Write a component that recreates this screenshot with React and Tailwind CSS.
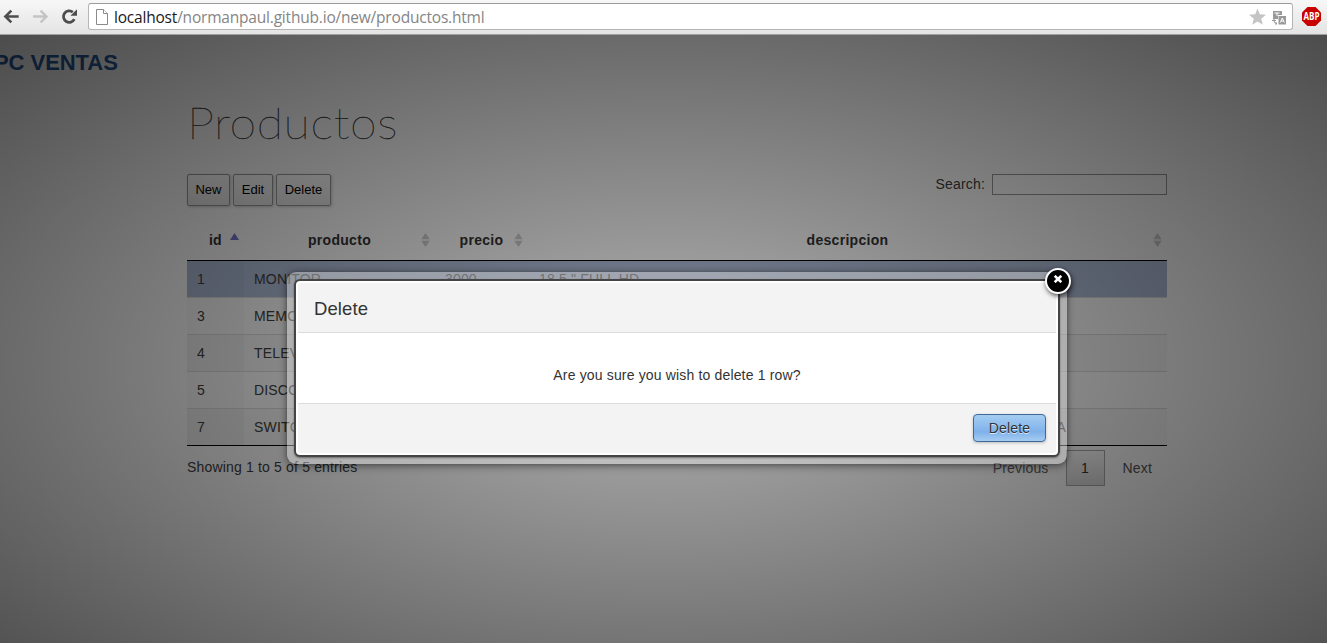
import React from "react";

const rows = [
  { id: 1, producto: "MONITOR", precio: "3000", descripcion: "18.5 \" FULL HD" },
  { id: 3, producto: "MEMORIA", precio: "800", descripcion: "8 GB DDR3" },
  { id: 4, producto: "TELEVISOR", precio: "9000", descripcion: "40 \" FULL HD" },
  { id: 5, producto: "DISCO DURO", precio: "1200", descripcion: "1 TB SATA" },
  { id: 7, producto: "SWITCH", precio: "1500", descripcion: "SWITCH 24 PUERTOS LAN A" },
];

const rowTone = (i) => {
  if (i === 0) return "bg-[#b0bed9]";
  return i % 2 === 0 ? "bg-[#f9f9f9] border-t border-[#dddddd]" : "bg-white border-t border-[#dddddd]";
};
const idTone = (i) => {
  if (i === 0) return "bg-[#acbad4]";
  return i % 2 === 0 ? "bg-[#f1f1f1]" : "bg-[#fafafa]";
};

function SortIcon() {
  return (
    <svg className="shrink-0" width="9" height="14" viewBox="0 0 9 14" fill="#cdcdcd">
      <path d="M4.5 0 8.7 6.3H.3ZM4.5 14 .3 7.7h8.4Z" />
    </svg>
  );
}

function BrowserBar() {
  return (
    <div className="flex h-[35px] items-start border-b border-[#a0a0a0] bg-linear-to-b from-[#f7f7f7] to-[#e4e4e4] pt-[3px]">
      <svg className="mt-[5px] ml-[3px] shrink-0" width="80" height="17" viewBox="0 0 80 17" fill="none">
        <path d="M15.7 8.5H3M8.3 2.6 2.4 8.5l5.9 5.9" stroke="#4d4d4d" strokeWidth="2.6" />
        <path d="M30 8.5h12.7M37.6 2.6l5.9 5.9-5.9 5.9" stroke="#c4c4c4" strokeWidth="2.4" />
        <path d="M71.3 11.1A5.7 5.7 0 1 1 69.8 4.2" stroke="#4d4d4d" strokeWidth="2.8" />
        <path d="M74 1.2v6.6h-6.6Z" fill="#4d4d4d" />
      </svg>
      <div className="ml-[5px] flex h-[27px] w-[1205px] shrink-0 items-center rounded-[3px] border border-[#b5b5b5] border-t-[#9b9b9b] bg-white pl-[7px]">
        <svg width="12" height="16" viewBox="0 0 12 16" fill="#fff" stroke="#8b8b8b">
          <path d="M.5.5h7l4 4v11H.5Z" />
          <path d="M7.5.5v4h4" />
        </svg>
        <div className="ml-[6px] font-['Open_Sans',sans-serif] text-[15.5px] leading-[24px] tracking-[-0.2px] whitespace-nowrap text-[#858585]">
          <span className="text-[#1a1a1a]">localhost</span>/normanpaul.github.io/new/productos.html
        </div>
        <svg className="mr-[5px] ml-auto" width="38" height="18" viewBox="0 0 38 18">
          <path d="m8.5.5 2.3 5.8 6.2.4-4.8 4 1.6 6.1-5.3-3.4-5.3 3.4 1.6-6.1-4.8-4 6.2-.4Z" fill="#c4c4c4" />
          <path d="M24 3h9v4h-4v4h-5ZM29.500 8H37v8.500h-7.500Z" fill="#999" />
          <path d="M25.500 5h5M28 5v3" stroke="#fff" />
          <path d="m31.300 14.500 2-4.500 2 4.500M32 13h2.600" stroke="#fff" fill="none" />
          <path d="M23 12.500h4M25 10.500v2.500q0 2.500 3 2.500M27 14v3" stroke="#999" fill="none" />
        </svg>
      </div>
      <svg className="mt-[3px] ml-[8px] shrink-0" width="21" height="21" viewBox="0 0 21 21">
        <path d="M6.500 1h8L20 6.500v8L14.500 20h-8L1 14.500v-8Z" fill="#c80000" />
        <text x="10.500" y="14" textAnchor="middle" textLength="16" lengthAdjust="spacingAndGlyphs" className="fill-white font-['Open_Sans',sans-serif] text-[10px] font-bold">ABP</text>
      </svg>
    </div>
  );
}

function ToolButton({ children, width }) {
  return (
    <button className={`${width} h-[32px] rounded-[2px] border border-[#999999] bg-linear-to-b from-white to-[#e9e9e9] text-[13px] tracking-normal text-black shadow-[1px_1px_3px_#ccc]`}>
      {children}
    </button>
  );
}

function Products() {
  return (
    <div className="h-[608px] bg-white text-[14px] tracking-[0.17px] text-[#404040]">
      <div className="-ml-[6px] pt-[14px] text-[22px] leading-[28px] font-bold tracking-[-0.05px] text-[#285a9c]">PC VENTAS</div>
      <div className="ml-[187px] w-[980px]">
        <h1 className="mt-[18px] h-[56px] w-[200px] origin-left scale-x-[1.1] font-[Lato,sans-serif] text-[44px] leading-[54px] font-[100] tracking-[0.5px] text-[#333333] [-webkit-text-stroke:0.3px_#333]">Productos</h1>
        <div className="mt-[23px] flex h-[41px] items-start justify-between">
          <div className="flex gap-[3px]">
            <ToolButton width="w-[43px]">New</ToolButton>
            <ToolButton width="w-[40px]">Edit</ToolButton>
            <ToolButton width="w-[55px]">Delete</ToolButton>
          </div>
          <label className="flex items-center gap-[7px] leading-[21px]">
            Search:
            <span className="block h-[21px] w-[175px] border border-[#999999]" />
          </label>
        </div>
        <div className="flex h-[46px] items-center border-b border-black pt-[5px] font-bold text-[#333333]">
          <div className="flex w-[57px] items-center pl-[22px]">
            id
            <svg className="-mt-[8px] ml-[8px]" width="9" height="7" viewBox="0 0 9 7"><path d="M4.500 0 9 7H0Z" fill="#7578d0" /></svg>
          </div>
          <div className="flex w-[191px] items-center pr-[5px] tracking-[0.3px]"><span className="flex-1 pl-[14px] text-center">producto</span><SortIcon /></div>
          <div className="flex w-[94px] items-center pr-[6px] pl-[14px] tracking-[0.3px]"><span className="flex-1 text-center">precio</span><SortIcon /></div>
          <div className="flex flex-1 items-center pr-[5px] tracking-[0.3px]"><span className="flex-1 pl-[13px] text-center">descripcion</span><SortIcon /></div>
        </div>
        <div className="border-b border-black">
          {rows.map((r, i) => (
            <div key={r.id} className={`flex ${i === 0 ? "h-[36px]" : "h-[37px]"} items-stretch leading-[36px] ${rowTone(i)}`}>
              <div className={`w-[57px] pl-[10px] ${idTone(i)}`}>{r.id}</div>
              <div className="w-[191px] pl-[10px]">{r.producto}</div>
              <div className="w-[94px] pl-[10px]">{r.precio}</div>
              <div className="flex-1 pl-[10px] whitespace-nowrap">
                {i === 4 ? <div className="w-[527px] text-right">{r.descripcion}</div> : r.descripcion}
              </div>
            </div>
          ))}
        </div>
        <div className="flex justify-between pt-[4px]">
          <div className="pt-[7px] leading-[20px]">Showing 1 to 5 of 5 entries</div>
          <div className="flex items-center leading-[36px]">
            <span className="mr-[17px] text-[#666666]">Previous</span>
            <span className="h-[36px] w-[39px] border border-[#aaaaaa] bg-linear-to-b from-white to-[#dcdcdc] text-center leading-[34px] text-[#333333]">1</span>
            <span className="mr-[15px] ml-[18px] text-[#555555]">Next</span>
          </div>
        </div>
      </div>
    </div>
  );
}

function DeleteDialog() {
  return (
    <div className="absolute top-[237px] left-[287px] h-[192px] w-[780px] rounded-[9px] bg-white/35 p-[7px] shadow-[0_0_5px_rgba(0,0,0,0.35),0_3px_8px_rgba(0,0,0,0.3)]">
      <div className="flex h-[178px] w-[766px] flex-col rounded-[6px] border-[2px] border-[#444444] bg-white p-[2px] text-[#333333] shadow-[0_1px_2px_rgba(0,0,0,0.4)]">
        <div className="h-[50px] rounded-t-[3px] border-b border-[#dddddd] bg-[#f3f3f3] pl-[16px] text-[18.5px] leading-[52px] tracking-[0.1px]">Delete</div>
        <div className="flex-1 pt-[32px] text-center text-[14px] leading-[20px] tracking-[0.16px]">Are you sure you wish to delete 1 row?</div>
        <div className="flex h-[50px] justify-end rounded-b-[3px] border-t border-[#dddddd] bg-[#f3f3f3] pt-[10px] pr-[10px]">
          <button className="h-[28px] w-[73px] rounded-[4px] border border-[#3f6a98] bg-linear-to-b from-[#a5cdf2] via-[#7fb1ea] via-65% to-[#a5cdf2] text-[14px] tracking-[0.15px] text-[#333333] shadow-[0_1px_3px_#bbb] [text-shadow:0_1px_0_#d7e9fb]">Delete</button>
        </div>
      </div>
      <div className="absolute -top-[4px] right-[-4px] flex h-[26px] w-[26px] items-center justify-center rounded-full border-2 border-white bg-black shadow-[1px_2px_5px_rgba(0,0,0,0.7)]">
        <svg className="-mt-[4px]" width="10" height="8" viewBox="0 0 10 8"><path d="m1.700.800 6.600 6.400m0-6.400L1.700 7.200" stroke="#fff" strokeWidth="2.600" /></svg>
      </div>
    </div>
  );
}

export default function App() {
  return (
    <div className="h-[643px] w-[1327px] overflow-hidden font-['Liberation_Sans',Arial,sans-serif]">
      <BrowserBar />
      <div className="relative h-[608px] overflow-hidden">
        <Products />
        <div className="absolute inset-x-0 top-0 h-[658px] bg-[radial-gradient(ellipse_farthest-corner_at_center,rgba(0,0,0,0.3)_0%,rgba(0,0,0,0.7)_100%)]" />
        <DeleteDialog />
      </div>
    </div>
  );
}
